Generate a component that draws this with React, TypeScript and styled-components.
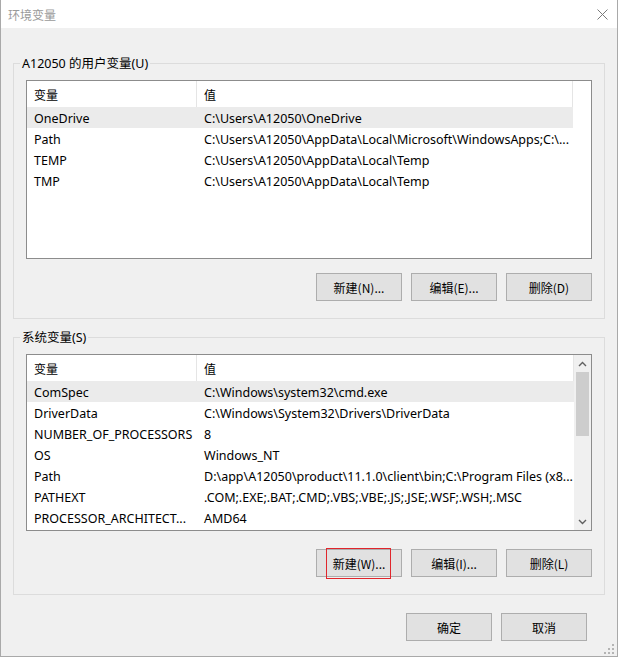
import React, { FC } from "react";
import styled, { createGlobalStyle } from "styled-components";

const GlobalStyle = createGlobalStyle`
  html, body {
    margin: 0;
    padding: 0;
    background: #ffffff;
  }
  body {
    font-family: "Noto Sans", "Noto Sans CJK SC", sans-serif;
    font-size: 12.5px;
    color: #000;
  }
`;

const Dialog = styled.div`
  width: 616px;
  height: 656px;
  display: flex;
  flex-direction: column;
  border: 1px solid #a9a9a9;
  border-top: none;
  background: #f0f0f0;
  position: relative;
`;

const TitleBar = styled.div`
  height: 28px;
  background: #ffffff;
  display: flex;
  align-items: center;
  justify-content: space-between;
  padding: 0 9px 0 7px;
`;

const Title = styled.span`
  font-family: "Noto Sans CJK SC", sans-serif;
  font-size: 12px;
  color: #9a9a9a;
`;

const CloseIcon = styled.svg`
  width: 11px;
  height: 11px;
`;

const Body = styled.div`
  display: flex;
  flex-direction: column;
  gap: 10px;
  padding: 27px 12px 0 12px;
`;

const Group = styled.fieldset`
  margin: 0;
  padding: 8px 12px 17px 12px;
  border: 1px solid #dcdcdc;
  min-width: 0;
`;

const Legend = styled.legend`
  margin-left: -6px;
  padding: 0 2px;
  font-family: "Noto Sans", "Noto Sans CJK SC", sans-serif;
  font-size: 12.5px;
  line-height: 17px;
`;

const List = styled.div<{ $height: number }>`
  height: ${(p) => p.$height}px;
  border: 1px solid #8c8c8c;
  background: #ffffff;
  display: flex;
  overflow: hidden;
`;

const ListMain = styled.div<{ $w: number }>`
  width: ${(p) => p.$w}px;
  display: flex;
  flex-direction: column;
`;

const Header = styled.div`
  display: flex;
  height: 26px;
  flex-shrink: 0;
  align-items: center;
  border-right: 1px solid #e5e5e5;
`;

const HeaderCell = styled.div<{ $w?: number }>`
  ${(p) => (p.$w ? `width: ${p.$w}px;` : "flex: 1;")}
  height: 100%;
  display: flex;
  align-items: center;
  padding-left: 7px;
  box-sizing: border-box;
  font-family: "Noto Sans CJK SC", sans-serif;
  font-size: 12px;
  border-right: ${(p) => (p.$w ? "1px solid #e5e5e5" : "none")};
`;

const Row = styled.div<{ $selected?: boolean }>`
  display: flex;
  height: 21px;
  box-sizing: border-box;
  padding-top: 2px;
  flex-shrink: 0;
  align-items: center;
  background: ${(p) => (p.$selected ? "#ebebeb" : "transparent")};
`;

const Cell = styled.div<{ $w?: number }>`
  ${(p) => (p.$w ? `width: ${p.$w}px;` : "flex: 1;")}
  padding-left: 7px;
  box-sizing: border-box;
  white-space: nowrap;
  overflow: hidden;
`;

const Scrollbar = styled.div`
  width: 17px;
  margin-left: auto;
  background: #f0f0f0;
  display: flex;
  flex-direction: column;
  align-items: center;
`;

const ScrollArrow = styled.div`
  height: 17px;
  width: 17px;
  display: flex;
  align-items: center;
  justify-content: center;
`;

const ScrollTrack = styled.div`
  flex: 1;
  width: 13px;
`;

const Thumb = styled.div`
  height: 64px;
  background: #cdcdcd;
`;

const ButtonRow = styled.div<{ $top: number }>`
  display: flex;
  justify-content: flex-end;
  gap: 9px;
  margin-top: ${(p) => p.$top}px;
`;

const Button = styled.button`
  position: relative;
  width: 86px;
  height: 28px;
  background: #e1e1e1;
  border: 1px solid #adadad;
  font-family: "Noto Sans CJK SC", sans-serif;
  font-size: 12px;
  color: #000;
  padding: 0;
`;

const Highlight = styled.span`
  position: absolute;
  left: 9px;
  top: -2px;
  width: 63px;
  height: 29px;
  border: 1px solid #e0262c;
`;

const Footer = styled.div`
  padding: 18px 30px 0 0;
  display: flex;
  justify-content: flex-end;
  gap: 9px;
`;

const Grip = styled.svg`
  position: absolute;
  right: 3px;
  bottom: 2px;
  width: 10px;
  height: 10px;
`;

type Variable = { name: string; value: string };

const userVars: Variable[] = [
  { name: "OneDrive", value: "C:\\Users\\A12050\\OneDrive" },
  {
    name: "Path",
    value: "C:\\Users\\A12050\\AppData\\Local\\Microsoft\\WindowsApps;C:\\...",
  },
  { name: "TEMP", value: "C:\\Users\\A12050\\AppData\\Local\\Temp" },
  { name: "TMP", value: "C:\\Users\\A12050\\AppData\\Local\\Temp" },
];

const systemVars: Variable[] = [
  { name: "ComSpec", value: "C:\\Windows\\system32\\cmd.exe" },
  { name: "DriverData", value: "C:\\Windows\\System32\\Drivers\\DriverData" },
  { name: "NUMBER_OF_PROCESSORS", value: "8" },
  { name: "OS", value: "Windows_NT" },
  {
    name: "Path",
    value: "D:\\app\\A12050\\product\\11.1.0\\client\\bin;C:\\Program Files (x8...",
  },
  { name: "PATHEXT", value: ".COM;.EXE;.BAT;.CMD;.VBS;.VBE;.JS;.JSE;.WSF;.WSH;.MSC" },
  { name: "PROCESSOR_ARCHITECT...", value: "AMD64" },
];

const VarList: FC<{ vars: Variable[]; height: number; scroll?: boolean }> = ({
  vars,
  height,
  scroll,
}) => (
  <List $height={height}>
    <ListMain $w={scroll ? 547 : 546}>
      <Header>
        <HeaderCell $w={170}>变量</HeaderCell>
        <HeaderCell>值</HeaderCell>
      </Header>
      {vars.map((v, i) => (
        <Row key={v.name + i} $selected={i === 0}>
          <Cell $w={170}>{v.name}</Cell>
          <Cell>{v.value}</Cell>
        </Row>
      ))}
    </ListMain>
    {scroll && (
      <Scrollbar>
        <ScrollArrow>
          <svg width="9" height="6" viewBox="0 0 9 6">
            <path d="M1 5 L4.5 1.5 L8 5" fill="none" stroke="#606060" strokeWidth="1.4" />
          </svg>
        </ScrollArrow>
        <ScrollTrack>
          <Thumb />
        </ScrollTrack>
        <ScrollArrow>
          <svg width="9" height="6" viewBox="0 0 9 6">
            <path d="M1 1 L4.5 4.5 L8 1" fill="none" stroke="#606060" strokeWidth="1.4" />
          </svg>
        </ScrollArrow>
      </Scrollbar>
    )}
  </List>
);

const App: FC = () => (
  <>
    <GlobalStyle />
    <Dialog>
      <TitleBar>
        <Title>环境变量</Title>
        <CloseIcon viewBox="0 0 11 11">
          <path d="M0.5 0.5 L10.5 10.5 M10.5 0.5 L0.5 10.5" stroke="#7a7a7a" strokeWidth="1" />
        </CloseIcon>
      </TitleBar>
      <Body>
        <Group>
          <Legend>A12050 的用户变量(U)</Legend>
          <VarList vars={userVars} height={177} />
          <ButtonRow $top={14}>
            <Button>新建(N)...</Button>
            <Button>编辑(E)...</Button>
            <Button>删除(D)</Button>
          </ButtonRow>
        </Group>
        <Group>
          <Legend>系统变量(S)</Legend>
          <VarList vars={systemVars} height={175} scroll />
          <ButtonRow $top={18}>
            <Button>
              新建(W)...
              <Highlight />
            </Button>
            <Button>编辑(I)...</Button>
            <Button>删除(L)</Button>
          </ButtonRow>
        </Group>
      </Body>
      <Footer>
        <Button>确定</Button>
        <Button>取消</Button>
      </Footer>
      <Grip viewBox="0 0 10 10">
        {[
          [8, 0],
          [4, 4],
          [8, 4],
          [0, 8],
          [4, 8],
          [8, 8],
        ].map(([x, y]) => (
          <rect key={`${x}-${y}`} x={x} y={y} width="2" height="2" fill="#b4b4b4" />
        ))}
      </Grip>
    </Dialog>
  </>
);

export default App;
